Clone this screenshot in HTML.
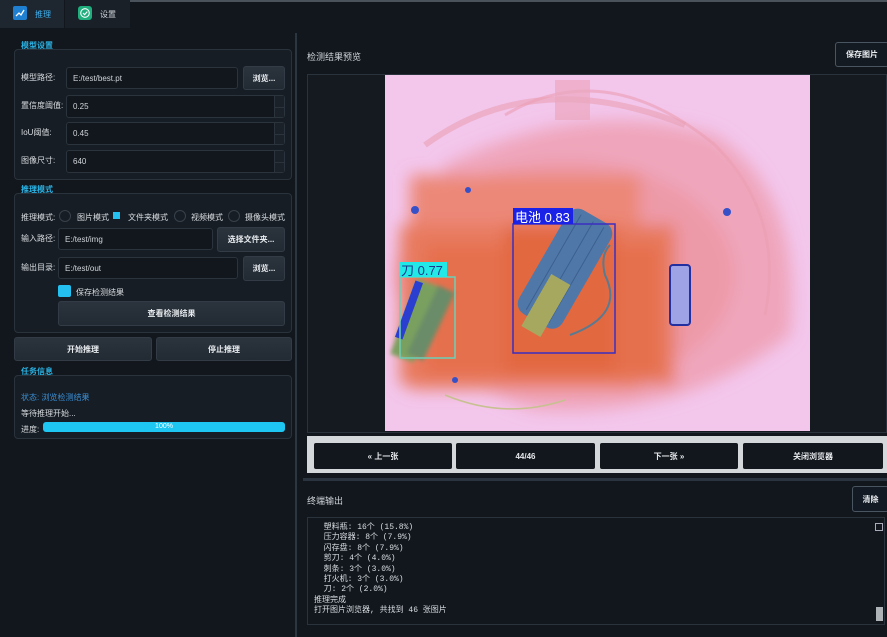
<!DOCTYPE html>
<html><head><meta charset="utf-8"><style>
*{margin:0;padding:0;box-sizing:border-box}
body{width:887px;height:637px;background:#12171d;font-family:"Liberation Sans","Noto Sans CJK SC",sans-serif;color:#d8dde2;font-size:8px;position:relative;overflow:hidden}
.a{position:absolute}
.t{position:absolute;white-space:nowrap}
.grp{position:absolute;background:#171d24;border:1px solid #2a323b;border-radius:4px}
.in{position:absolute;background:#12171d;border:1px solid #2b333c;border-radius:3px;padding-left:6px;display:flex;align-items:center;color:#d0d5da}
.btn{position:absolute;background:linear-gradient(#2b333d,#222a33);border:1px solid #333c46;border-radius:3px;display:flex;align-items:center;justify-content:center;color:#e8ecef;font-weight:bold}
.sec{position:absolute;color:#2ab4e6;font-weight:bold;font-size:8px}
.spin{position:absolute;right:0;top:0;width:10px;height:100%;border-left:1px solid #2b333c;background:#1b2128}
.spin:after{content:"";position:absolute;left:0;right:0;top:50%;border-top:1px solid #2b333c}
.rad{position:absolute;width:12px;height:12px;border:1px solid #38414b;border-radius:50%}
.nb{position:absolute;top:443px;height:26px;background:#12171d;border-radius:2px;color:#e6e9ec;font-weight:bold;display:flex;align-items:center;justify-content:center}
.term{font-family:"Liberation Mono","Noto Sans CJK SC",monospace;font-size:8px;line-height:10.4px;color:#d8dde2}
.term div{height:10.4px}
</style></head><body>
<div class="a" style="left:130px;top:0;width:757px;height:2px;background:#4a525b"></div>
<div class="a" style="left:0;top:0;width:64px;height:28px;background:#1e2630"></div>
<div class="a" style="left:64px;top:0;width:66px;height:28px;background:#1a2028;border-left:1px solid #12171d"></div>
<svg class="a" style="left:13px;top:6px" width="14" height="14"><rect width="14" height="14" rx="2" fill="#1f7fd0"/><path d="M3 10 L6 7 L8 9 L11 4" stroke="#fff" stroke-width="1.3" fill="none"/></svg>
<div class="t" style="left:35px;top:9px;color:#3fb2f0">推理</div>
<svg class="a" style="left:78px;top:6px" width="14" height="14"><rect width="14" height="14" rx="3" fill="#1fae7c"/><circle cx="7" cy="7" r="4.3" stroke="#fff" stroke-width="1.1" fill="none"/><path d="M5 7 L6.6 8.6 L9.3 5.6" stroke="#fff" stroke-width="1.2" fill="none"/></svg>
<div class="t" style="left:100px;top:9px;color:#d0d5da">设置</div>
<div class="a" style="left:295px;top:33px;width:2px;height:604px;background:#2c3640"></div>

<div class="sec" style="left:21px;top:40px">模型设置</div>
<div class="grp" style="left:14px;top:49px;width:278px;height:131px"></div>
<div class="t" style="left:21px;top:72px">模型路径:</div>
<div class="in" style="left:66px;top:67px;width:172px;height:22px">E:/test/best.pt</div>
<div class="btn" style="left:243px;top:66px;width:42px;height:24px">浏览...</div>
<div class="t" style="left:21px;top:100px">置信度阈值:</div>
<div class="in" style="left:66px;top:95px;width:219px;height:23px">0.25<div class="spin"></div></div>
<div class="t" style="left:21px;top:127px">IoU阈值:</div>
<div class="in" style="left:66px;top:122px;width:219px;height:23px">0.45<div class="spin"></div></div>
<div class="t" style="left:21px;top:155px">图像尺寸:</div>
<div class="in" style="left:66px;top:150px;width:219px;height:23px">640<div class="spin"></div></div>

<div class="sec" style="left:21px;top:184px">推理模式</div>
<div class="grp" style="left:14px;top:193px;width:278px;height:140px"></div>
<div class="t" style="left:21px;top:212px">推理模式:</div>
<div class="rad" style="left:59px;top:210px"></div><div class="t" style="left:77px;top:212px">图片模式</div>
<div class="a" style="left:113px;top:212px;width:7px;height:7px;background:#23c0f0"></div><div class="t" style="left:128px;top:212px">文件夹模式</div>
<div class="rad" style="left:174px;top:210px"></div><div class="t" style="left:191px;top:212px">视频模式</div>
<div class="rad" style="left:228px;top:210px"></div><div class="t" style="left:245px;top:212px">摄像头模式</div>
<div class="t" style="left:21px;top:233px">输入路径:</div>
<div class="in" style="left:58px;top:228px;width:155px;height:22px">E:/test/img</div>
<div class="btn" style="left:217px;top:227px;width:68px;height:25px">选择文件夹...</div>
<div class="t" style="left:21px;top:262px">输出目录:</div>
<div class="in" style="left:58px;top:257px;width:180px;height:22px">E:/test/out</div>
<div class="btn" style="left:243px;top:256px;width:42px;height:25px">浏览...</div>
<div class="a" style="left:58px;top:285px;width:13px;height:12px;background:#23c0f0;border-radius:2px"></div>
<div class="t" style="left:76px;top:287px">保存检测结果</div>
<div class="btn" style="left:58px;top:301px;width:227px;height:25px">查看检测结果</div>
<div class="btn" style="left:14px;top:337px;width:138px;height:24px">开始推理</div>
<div class="btn" style="left:156px;top:337px;width:136px;height:24px">停止推理</div>

<div class="sec" style="left:21px;top:366px">任务信息</div>
<div class="grp" style="left:14px;top:375px;width:278px;height:64px"></div>
<div class="t" style="left:21px;top:392px;color:#3a8fd6">状态: 浏览检测结果</div>
<div class="t" style="left:21px;top:408px">等待推理开始...</div>
<div class="t" style="left:21px;top:424px">进度:</div>
<div class="a" style="left:43px;top:422px;width:242px;height:10px;background:#1ec6f2;border-radius:3px;color:#fff;font-size:7px;text-align:center;line-height:10px">100%</div>

<div class="t" style="left:307px;top:50px;font-size:9px;color:#cfd4d9">检测结果预览</div>
<div class="btn" style="left:835px;top:42px;width:54px;height:25px;background:#141a22;border:1px solid #4a5562;font-size:8px">保存图片</div>
<div class="a" style="left:307px;top:74px;width:580px;height:359px;background:#141a20;border:1px solid #2a323b"></div>
<svg class="a" style="left:385px;top:75px" width="425" height="356" viewBox="0 0 425 356">
<defs><filter id="bl"><feGaussianBlur stdDeviation="8"/></filter><filter id="b2"><feGaussianBlur stdDeviation="2"/></filter></defs>
<rect width="425" height="356" fill="#f3c6ec"/>
<g filter="url(#bl)">
<path d="M60 90 Q200 20 330 60 Q420 120 405 260 Q300 345 150 335 Q30 300 20 200 Z" fill="#efa6bc"/>
<ellipse cx="180" cy="200" rx="170" ry="115" fill="#ed9aa8"/>
<rect x="25" y="100" width="230" height="215" fill="#ec8878"/>
<rect x="15" y="150" width="275" height="160" fill="#e87a5e"/>
<rect x="40" y="170" width="235" height="130" fill="#e5704e"/>
<rect x="120" y="150" width="110" height="150" fill="#e2683f"/>
</g>
<path d="M40 70 Q150 -10 300 50" stroke="#e9a0b4" stroke-width="6" fill="none" opacity="0.6"/>
<path d="M120 40 Q220 -20 330 70 Q400 140 380 240" stroke="#eb9fb2" stroke-width="3" fill="none" opacity="0.6"/>
<rect x="170" y="5" width="35" height="40" fill="#eba7bf" opacity="0.7"/>
<g filter="url(#b2)">
<rect x="20" y="205" width="25" height="80" fill="#7aa060" transform="rotate(20 30 240)"/>
<rect x="38" y="210" width="18" height="75" fill="#6a8c68" transform="rotate(25 45 245)"/>
</g>
<g transform="rotate(30 185 185)">
<rect x="160" y="135" width="50" height="120" rx="12" fill="#4f78a8"/>
<path d="M172 140 V250 M186 140 V250 M198 140 V250" stroke="#3c6090" stroke-width="1"/>
</g>
<rect x="150" y="200" width="22" height="60" fill="#a7a860" transform="rotate(30 160 230)"/>
<path d="M185 260 Q240 240 220 200 Q215 180 225 170" stroke="#5a7a90" stroke-width="2" fill="none"/>
<rect x="285" y="190" width="20" height="60" rx="3" fill="#9ea3e6" stroke="#2330a0" stroke-width="2"/>
<rect x="20" y="205" width="8" height="60" fill="#2a3ed0" transform="rotate(20 24 235)"/>
<circle cx="30" cy="135" r="4" fill="#3650c8"/><circle cx="83" cy="115" r="3" fill="#3650c8"/><circle cx="342" cy="137" r="4" fill="#3650c8"/>
<path d="M60 320 Q120 345 180 325" stroke="#c7c090" stroke-width="1.5" fill="none"/>
<circle cx="70" cy="305" r="3" fill="#3650c8"/>
<rect x="128" y="149" width="102" height="129" fill="none" stroke="#3b2ec0" stroke-width="1.5"/>
<rect x="128" y="133" width="60" height="16" fill="#1b22e8"/>
<text x="130" y="147" font-size="13" fill="#fff" font-family="Liberation Sans,Noto Sans CJK SC,sans-serif">电池 0.83</text>
<rect x="15" y="202" width="55" height="81" fill="none" stroke="#6ad0b8" stroke-width="1.5"/>
<rect x="15" y="187" width="47" height="15" fill="#22e8e8"/>
<text x="16" y="200" font-size="13" fill="#1a3a8a" font-family="Liberation Sans,Noto Sans CJK SC,sans-serif">刀 0.77</text>
</svg>
<div class="a" style="left:307px;top:436px;width:580px;height:37px;background:#d4d8da"></div>
<div class="nb" style="left:314px;width:138px">« 上一张</div>
<div class="nb" style="left:456px;width:139px">44/46</div>
<div class="nb" style="left:600px;width:138px">下一张 »</div>
<div class="nb" style="left:743px;width:140px">关闭浏览器</div>
<div class="a" style="left:303px;top:478px;width:584px;height:3px;background:#2a3440"></div>
<div class="t" style="left:307px;top:494px;font-size:9px;color:#cfd4d9">终端输出</div>
<div class="btn" style="left:852px;top:486px;width:37px;height:26px;background:#141a24;border:1px solid #4a5562">清除</div>
<div class="a" style="left:307px;top:517px;width:578px;height:108px;background:#12171d;border:1px solid #2a323b"></div>
<div class="a" style="left:875px;top:523px;width:8px;height:8px;border:1px solid #aab"></div>
<div class="a term" style="left:314px;top:523px">
<div>&nbsp;&nbsp;塑料瓶: 16个 (15.8%)</div>
<div>&nbsp;&nbsp;压力容器: 8个 (7.9%)</div>
<div>&nbsp;&nbsp;闪存盘: 8个 (7.9%)</div>
<div>&nbsp;&nbsp;剪刀: 4个 (4.0%)</div>
<div>&nbsp;&nbsp;刺条: 3个 (3.0%)</div>
<div>&nbsp;&nbsp;打火机: 3个 (3.0%)</div>
<div>&nbsp;&nbsp;刀: 2个 (2.0%)</div>
<div>推理完成</div>
<div>打开图片浏览器, 共找到 46 张图片</div>
</div>
<div class="a" style="left:876px;top:607px;width:7px;height:14px;background:#aeb3b8"></div>
</body></html>
